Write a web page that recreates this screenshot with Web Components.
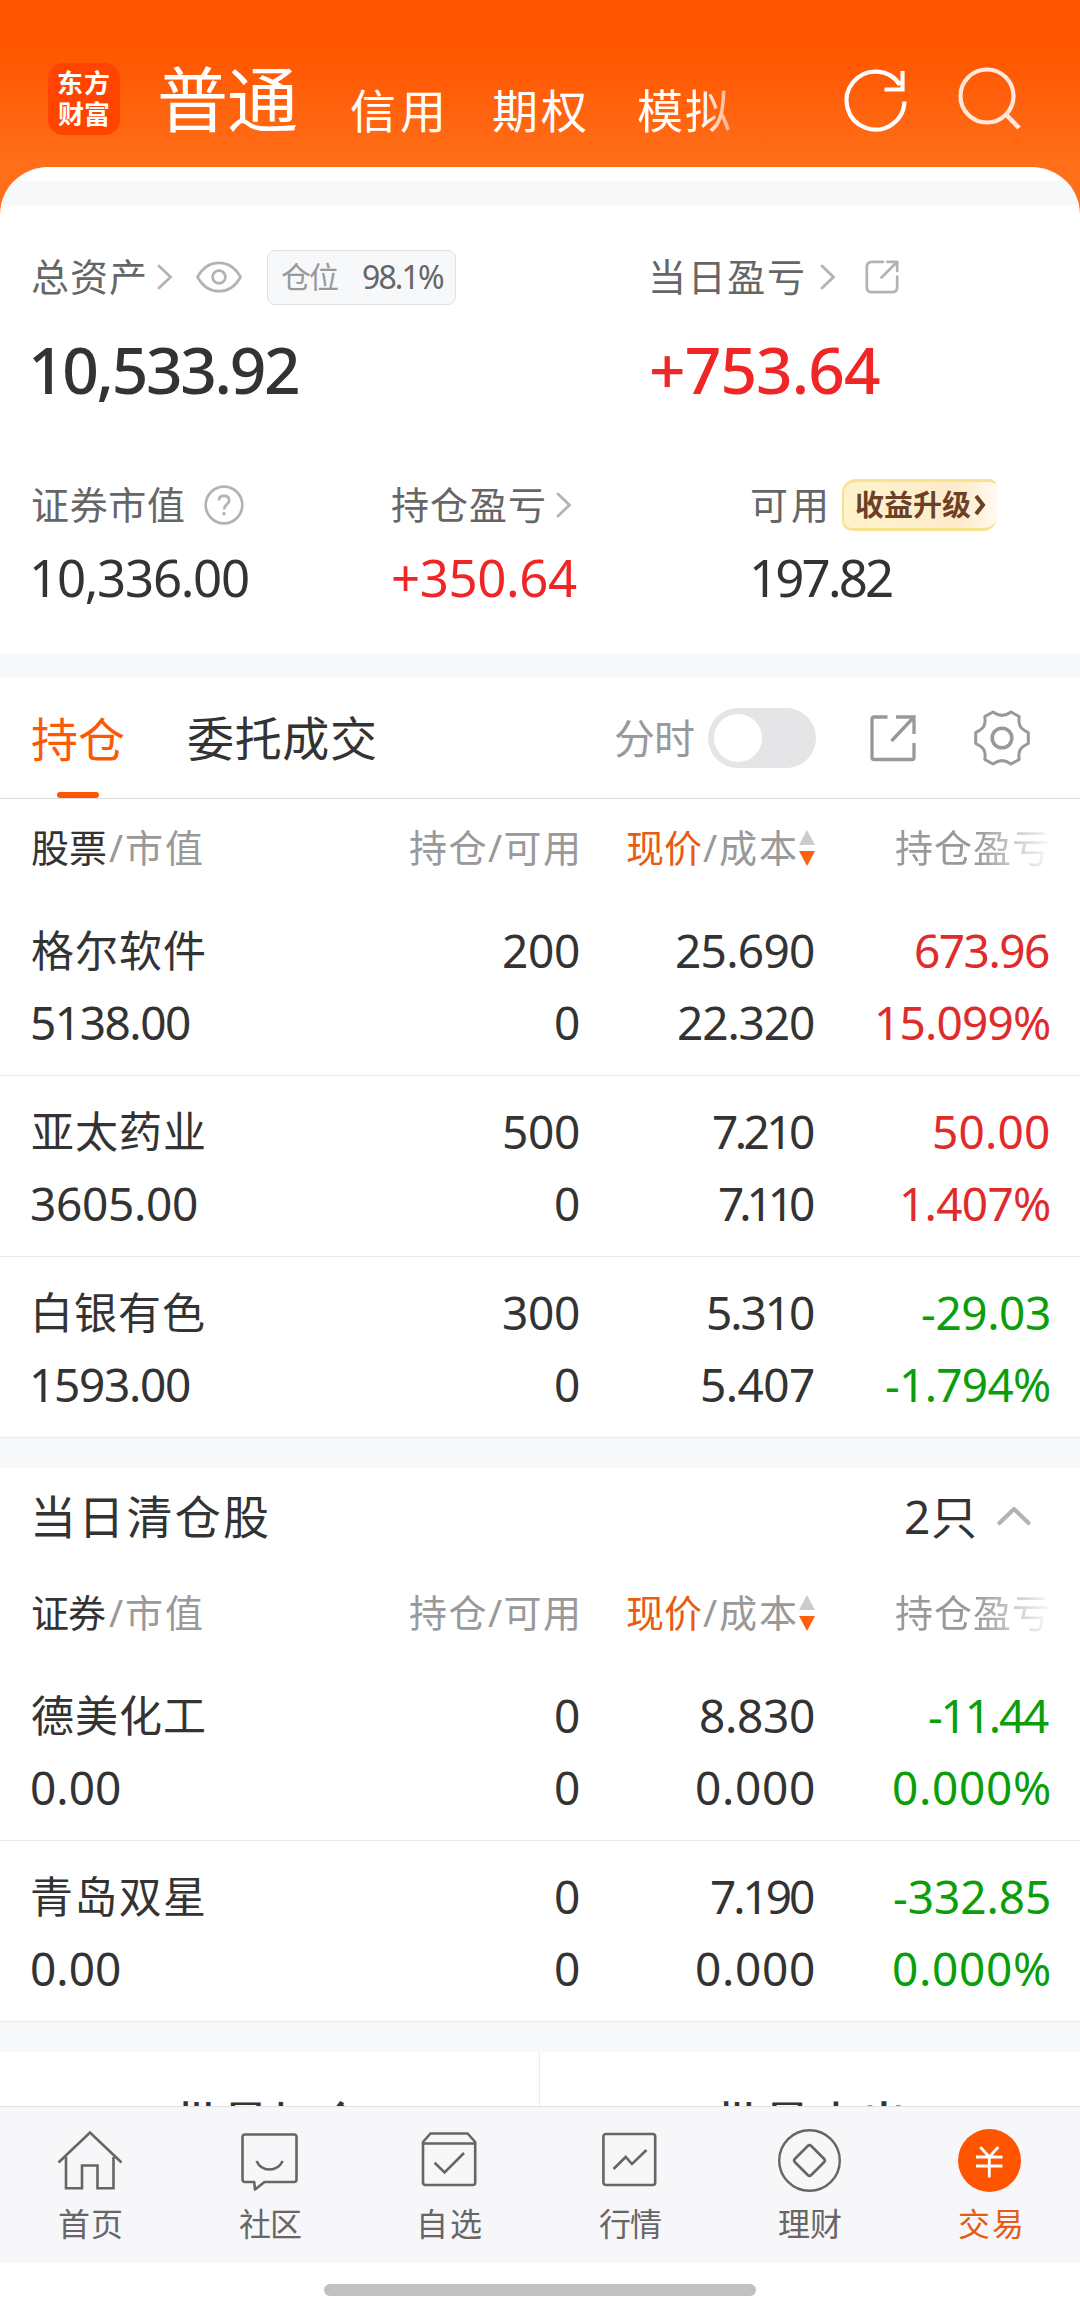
<!DOCTYPE html>
<html lang="zh-CN">
<head>
  <meta charset="utf-8">
  <title>交易</title>
  <style>
    html,
    body {
      margin: 0;
      padding: 0;
    }

    body {
      background-color: #FFFFFF;
      color: #333333;
      font-family: "Noto Sans", "Noto Sans CJK SC", sans-serif;
      height: 2318px;
      overflow: hidden;
      width: 1080px;
    }
  </style>
</head>
<body>
  <trade-page></trade-page>

  <script>
    class BaseElement extends HTMLElement {
      constructor() {
        super();

        const template = document.createElement('template');

        template.innerHTML = this.markup();
        this._shadow = this.attachShadow({ mode: 'open' });
        this._shadow.appendChild(template.content.cloneNode(true));
      }

      attr(name) {
        return this.getAttribute(name) || '';
      }
    }

    // A run of text whose box is its ink; "w" spreads the letters over that width,
    // "dx" keeps a small bearing before it.
    class TextRun extends BaseElement {
      markup() {
        return `
          <style>
            :host { display: block; flex: none; white-space: nowrap; }
            span { display: block; width: max-content; }
          </style>
          <span><slot></slot></span>
        `;
      }

      connectedCallback() {
        const text = this.textContent;
        const context = document.createElement('canvas').getContext('2d');

        context.font = getComputedStyle(this).font;

        const box = context.measureText(text);
        const ink = box.actualBoundingBoxLeft + box.actualBoundingBoxRight;
        const width = Number(this.attr('w')) || ink;
        const $span = this._shadow.querySelector('span');

        this.style.width = `${width}px`;
        this.style.paddingLeft = `${Number(this.attr('dx'))}px`;
        $span.style.marginLeft = `${box.actualBoundingBoxLeft}px`;

        if (text.length > 1) $span.style.letterSpacing = `${(width - ink) / (text.length - 1)}px`;
      }
    }

    const ICONS = {
      refresh: [64, 64, `<path d="M60.5 33.5A29 29 0 1 1 56 17M58.500 3V21.500H40.500" stroke-width="4.2"/>`],
      search: [64, 64, `<circle cx="31" cy="29" r="26.500" stroke-width="4.2"/><path d="M50 47.500L63 61" stroke-width="4.6"/>`],
      right: [16, 26, `<path d="M2 2L13.500 13L2 24" stroke-width="2.8" stroke-linecap="round"/>`],
      up: [34, 20, `<path d="M2.500 17L17 3L31.500 17" stroke-width="4.2" stroke-linecap="round" stroke-linejoin="round"/>`],
      eye: [46, 32, `<path d="M1.500 16C7 6 14 1.800 23 1.800S39 6 44.500 16C39 26 32 30.200 23 30.200S7 26 1.500 16Z" stroke-width="2.7" stroke-linejoin="round"/><circle cx="23" cy="16" r="6.400" stroke-width="2.7"/>`],
      shareRound: [34, 34, `<path d="M18 1.800H7Q1.800 1.800 1.800 7V27Q1.800 32.200 7 32.200H27Q32.200 32.200 32.200 27V16.500M22.500 1.800H32.200V11M32 2L16.500 17.500" stroke-width="2.7" stroke-linejoin="round" stroke-linecap="round"/>`],
      share: [48, 48, `<path d="M18.500 3H5Q3 3 3 5V43.500Q3 45.500 5 45.500H43Q45 45.500 45 43.500V29M27 3H45V20M44.500 3.500L22.500 27" stroke-width="3.3"/>`],
      help: [40, 40, `<circle cx="20" cy="20" r="18.300" stroke-width="2.7"/><path d="M14.800 15.500Q15 10.800 20 10.800T25.200 15.500C25.200 19.200 20 19.500 20 24.500" stroke-width="2.7"/><circle cx="20" cy="28.800" r="1.800" fill="currentColor" stroke="none"/>`],
      gear: [56, 56, `<path d="M19 2L10.800 6.500C12 15 10 18.500 1.700 22.500V33.500C10 37.500 12 41 10.800 49.500L19 54C25 49.500 31 49.500 37 54L45.200 49.500C44 41 46 37.500 54.300 33.500V22.500C46 18.500 44 15 45.200 6.500L37 2C31 6.500 25 6.500 19 2Z" stroke-width="3" stroke-linejoin="round"/><circle cx="28" cy="28" r="9.800" stroke-width="3.6"/>`],
      sort: [16, 36, `<path d="M8 0L16 15H0Z" fill="#CCCCCC" stroke="none"/><path d="M8 36L0 21H16Z" fill="#FF600F" stroke="none"/>`],
      home: [64, 68, `<path d="M.5 33.500L32 3.500L63.500 33.500M8 28V59.200H24V36.500H39.500V59.200H55.500V28" stroke-width="2.6"/>`],
      chat: [64, 68, `<path d="M7 5.500H56Q58.500 5.500 58.500 8V50.500Q58.500 53 56 53H26.500L17 60.500L16.200 53H7Q4.500 53 4.500 50.500V8Q4.500 5.500 7 5.500Z" stroke-width="2.6" stroke-linejoin="round"/><path d="M18.500 32Q22.500 40.500 31.500 40.500T44.700 32" stroke-width="2.6"/>`],
      box: [64, 68, `<path d="M12.500 4.500H49.600L57.200 13V53.500Q57.200 56 54.700 56H7.500Q5 56 5 53.500V13ZM5 14.500H57.200" stroke-width="2.6" stroke-linejoin="round"/><path d="M16.600 33.700L26.600 43.500L46 24" stroke-width="2.6"/>`],
      chart: [64, 68, `<rect x="5.400" y="5" width="51.800" height="51" rx="2.500" stroke-width="2.6"/><path d="M15.500 40L27.700 28L34 35L48.500 21" stroke-width="2.6"/>`],
      coin: [64, 68, `<circle cx="31.500" cy="31.500" r="30.300" stroke-width="2.4"/><rect x="20" y="20" width="23" height="23" rx="2.500" transform="rotate(45 31.500 31.500)" stroke-width="2.6"/>`],
      yuan: [64, 68, `<circle cx="31.500" cy="31.500" r="31.500" fill="#FF5500" stroke="none"/><path d="M22.300 18L31.300 28L40.300 18M18 28H44.500M18 37H44.500M31.300 28V48.500" stroke="#FFFFFF" stroke-width="2.8"/>`]
    };

    class UiIcon extends BaseElement {
      markup() {
        const [width, height, shape] = ICONS[this.attr('name')];

        return `
          <style>
            :host { display: block; flex: none; }
            svg { display: block; overflow: visible; }
          </style>
          <svg width="${width}" height="${height}" viewBox="0 0 ${width} ${height}" fill="none" stroke="currentColor">${shape}</svg>
        `;
      }
    }

    class AppHeader extends BaseElement {
      markup() {
        return `
          <style>
            :host {
              background: linear-gradient(#FF5500 0, #FF5500 46px, #FF6F1A 167px);
              box-sizing: border-box;
              color: #FFFFFF;
              display: flex;
              height: 215px;
              padding: 63px 0 0 48px;
            }

            .Logo {
              background-color: #FF4400;
              border-radius: 15px;
              box-sizing: border-box;
              font-size: 26px;
              font-weight: 700;
              height: 72px;
              line-height: 31px;
              margin-right: 40px;
              padding: 5px 0 0 10px;
              width: 72px;
            }

            .Tab {
              font-size: 46px;
              line-height: 72px;
              margin: 11px 52px 0 0;
            }

            .Tab--active {
              font-size: 71px;
              margin: 0 54px 0 0;
            }

            .Tab--faded {
              margin-right: 114px;
              -webkit-mask-image: linear-gradient(90deg, #000 62px, rgba(0, 0, 0, .5) 92px);
              mask-image: linear-gradient(90deg, #000 62px, rgba(0, 0, 0, .5) 92px);
            }

            .Refresh { margin: 5px 48px 0 0; }

            .Search {
              color: #FFE8DC;
              margin-top: 4px;
            }
          </style>
          <div class="Logo">
            <text-run w="51">东方</text-run>
            <text-run w="51">财富</text-run>
          </div>
          <text-run class="Tab Tab--active" w="136">普通</text-run>
          <text-run class="Tab" w="90" dx="1">信用</text-run>
          <text-run class="Tab" w="93">期权</text-run>
          <text-run class="Tab Tab--faded" w="92">模拟</text-run>
          <ui-icon class="Refresh" name="refresh"></ui-icon>
          <ui-icon class="Search" name="search"></ui-icon>
        `;
      }
    }

    class AssetSummary extends BaseElement {
      markup() {
        return `
          <style>
            :host {
              box-sizing: border-box;
              display: block;
              height: 449px;
              padding: 45px 0 0 32px;
            }

            .Row { display: grid; }
            .Row--top { grid-template-columns: 619px 1fr; margin-bottom: 73px; }
            .Row--bottom { grid-template-columns: 360px 360px 1fr; }

            .Label {
              align-items: center;
              color: #666666;
              display: flex;
              font-size: 38px;
              height: 54px;
              line-height: 52px;
            }

            .Label > text-run { margin-top: -2px; }
            .Row--bottom .Label { height: 52px; line-height: 50px; }

            ui-icon { color: #B3B3B3; }

            .Value {
              font-size: 64px;
              font-weight: 500;
              line-height: 72px;
              margin-top: 30px;
            }

            .Row--bottom .Value {
              font-size: 51px;
              font-weight: 400;
              line-height: 60px;
              margin-top: 16px;
            }

            .Value--up { color: #F02525; }

            .Pill {
              align-items: center;
              background-color: #F7F8FA;
              border: 1px solid #E0E0E0;
              border-radius: 8px;
              box-sizing: border-box;
              display: flex;
              font-size: 30px;
              gap: 25px;
              height: 55px;
              line-height: 51px;
              margin-left: 25px;
              padding: 0 0 2px 13px;
              width: 189px;
            }

            .Pill__Name { color: #999999; }
            .Pill__Rate { font-size: 32px; }

            .Badge {
              align-items: center;
              background: linear-gradient(90deg, #FEF3CB, #FDEBCB 75%, #FFFAF0);
              border: solid #F9E28F;
              border-right-color: #FFF6DC;
              border-width: 3px 0 3px 2px;
              border-radius: 14px 8px 14px 10px;
              box-sizing: border-box;
              color: #6B4026;
              display: flex;
              font-size: 29px;
              font-weight: 700;
              gap: 3px;
              height: 52px;
              line-height: 46px;
              margin-left: 17px;
              padding-left: 12px;
              width: 155px;
            }
          </style>
          <div class="Row Row--top">
            <div>
              <div class="Label">
                <text-run w="113">总资产</text-run>
                <ui-icon name="right" style="margin-left: 12px"></ui-icon>
                <ui-icon name="eye" style="margin-left: 23px"></ui-icon>
                <div class="Pill">
                  <text-run class="Pill__Name" w="57">仓位</text-run>
                  <text-run class="Pill__Rate" w="81">98.1%</text-run>
                </div>
              </div>
              <text-run class="Value" w="265" dx="1">10,533.92</text-run>
            </div>
            <div>
              <div class="Label">
                <text-run w="151" dx="1">当日盈亏</text-run>
                <ui-icon name="right" style="margin-left: 17px"></ui-icon>
                <ui-icon name="shareRound" style="margin-left: 29px"></ui-icon>
              </div>
              <text-run class="Value Value--up" w="228" dx="1">+753.64</text-run>
            </div>
          </div>
          <div class="Row Row--bottom">
            <div>
              <div class="Label">
                <text-run w="152">证券市值</text-run>
                <ui-icon name="help" style="margin-left: 20px"></ui-icon>
              </div>
              <text-run class="Value" w="215" dx="1">10,336.00</text-run>
            </div>
            <div>
              <div class="Label">
                <text-run w="152">持仓盈亏</text-run>
                <ui-icon name="right" style="margin-left: 12px"></ui-icon>
              </div>
              <text-run class="Value Value--up" w="184" dx="1">+350.64</text-run>
            </div>
            <div>
              <div class="Label">
                <text-run w="73">可用</text-run>
                <div class="Badge">
                  <text-run w="115">收益升级</text-run>
                  <svg width="12" height="22" fill="none" stroke="currentColor" stroke-width="4"><path d="M2 2L9 11L2 20"/></svg>
                </div>
              </div>
              <text-run class="Value" w="139" dx="1">197.82</text-run>
            </div>
          </div>
        `;
      }
    }

    class PositionTabs extends BaseElement {
      markup() {
        return `
          <style>
            :host {
              align-items: center;
              border-bottom: 1px solid #DDDDDD;
              color: #999999;
              display: flex;
              font-size: 47px;
              height: 120px;
              line-height: 122px;
              padding-left: 32px;
            }

            .Tab { color: #333333; }

            .Tab--active {
              color: #FA5A05;
              height: 120px;
              margin-right: 64px;
            }

            .Tab__Bar {
              background-color: #FF5500;
              border-radius: 3px;
              height: 6px;
              margin: -8px auto 0;
              width: 42px;
            }

            .Switch {
              background-color: #E5E5E7;
              border-radius: 30px;
              box-sizing: border-box;
              height: 60px;
              margin: 0 53px 0 14px;
              padding: 6px;
              width: 108px;
            }

            .Switch__Knob {
              background-color: #FFFFFF;
              border-radius: 50%;
              height: 48px;
              width: 48px;
            }
          </style>
          <div class="Tab--active">
            <text-run w="92">持仓</text-run>
            <div class="Tab__Bar"></div>
          </div>
          <text-run class="Tab" w="188">委托成交</text-run>
          <text-run w="79" style="font-size: 41px; margin-left: 239px">分时</text-run>
          <div class="Switch"><div class="Switch__Knob"></div></div>
          <ui-icon name="share"></ui-icon>
          <ui-icon name="gear" style="margin-left: 57px"></ui-icon>
        `;
      }
    }

    const COLUMNS = `
      box-sizing: border-box;
      display: grid;
      grid-template-columns: 247px 300px 235px 235px;
      padding-left: 32px;
    `;

    class StockHeader extends BaseElement {
      markup() {
        return `
          <style>
            :host {
              ${COLUMNS}
              color: #999999;
              font-size: 38px;
              height: 96px;
              line-height: 96px;
            }

            div { align-items: center; display: flex; }
            .First { color: #333333; margin-right: 3px; }
            .Price { color: #E65C12; margin-right: 2px; }
            .Held { justify-content: flex-end; padding-right: 2px; }
            .Cost { justify-content: flex-end; margin-right: -1px; }
            ui-icon { margin: 2px 0 0 3px; }

            .Profit {
              margin-left: 82px;
              -webkit-mask-image: linear-gradient(90deg, #000 80px, rgba(0, 0, 0, .08) 152px);
              mask-image: linear-gradient(90deg, #000 80px, rgba(0, 0, 0, .08) 152px);
            }
          </style>
          <div><text-run class="First" w="74">${this.attr('label')}</text-run><text-run w="93">/市值</text-run></div>
          <div class="Held"><text-run w="167">持仓/可用</text-run></div>
          <div class="Cost">
            <text-run class="Price" w="74">现价</text-run><text-run w="93">/成本</text-run>
            <ui-icon name="sort"></ui-icon>
          </div>
          <text-run class="Profit" w="152">持仓盈亏</text-run>
        `;
      }
    }

    // Cells are "text:width:dx", two lines of four columns.
    class StockRow extends BaseElement {
      markup() {
        const cells = this.attr('cells').split(' ').map((cell, index) => {
          const [text, width, dx] = cell.split(':');

          return `<text-run class="${index % 4 === 3 ? 'Profit' : ''}" w="${width || ''}" dx="${dx || ''}">${text}</text-run>`;
        });

        return `
          <style>
            :host {
              ${COLUMNS}
              border-bottom: 1px solid #EBEBEB;
              font-size: 46px;
              grid-template-rows: 72px 72px;
              height: 181px;
              line-height: 70px;
              padding-top: 20px;
            }

            text-run { justify-self: end; }
            text-run:nth-of-type(4n + 1) { justify-self: start; }
            text-run:nth-of-type(1) { font-size: 43px; line-height: 72px; }
            .Profit { color: #E02B2B; }
            :host([down]) .Profit { color: #0A9E0A; }
          </style>
          ${cells.join('')}
        `;
      }
    }

    class ClearedTitle extends BaseElement {
      markup() {
        return `
          <style>
            :host {
              align-items: center;
              display: flex;
              font-size: 46px;
              height: 96px;
              line-height: 98px;
              padding: 0 49px 0 32px;
            }

            .Count { margin: 0 22px 0 auto; }
            ui-icon { color: #B3B3B3; }
          </style>
          <text-run w="233" dx="3">当日清仓股</text-run>
          <text-run class="Count" w="69">2只</text-run>
          <ui-icon name="up"></ui-icon>
        `;
      }
    }

    class BatchActions extends BaseElement {
      markup() {
        return `
          <style>
            :host {
              display: grid;
              font-size: 46px;
              font-weight: 500;
              grid-template-columns: 539px 1fr;
              height: 54px;
              line-height: 140px;
              overflow: hidden;
            }

            div { display: flex; justify-content: center; }
            div + div { border-left: 1px solid #EBEBEB; }
          </style>
          <div><text-run w="186">批量加仓</text-run></div>
          <div><text-run w="186">批量卖出</text-run></div>
        `;
      }
    }

    class TabBar extends BaseElement {
      markup() {
        const tabs = [
          ['home', '首页'], ['chat', '社区'], ['box', '自选', 60, 2],
          ['chart', '行情'], ['coin', '理财'], ['yuan', '交易']
        ];

        return `
          <style>
            :host {
              background-color: #F7F7FA;
              border-top: 1px solid #E2E2E2;
              color: #666666;
              display: grid;
              font-size: 32px;
              grid-template-columns: repeat(6, 180px);
              height: 156px;
              line-height: 40px;
            }

            div {
              align-items: center;
              display: flex;
              flex-direction: column;
              gap: 7px;
              padding-top: 22px;
            }

            div:last-of-type { color: #E65C12; }
          </style>
          ${tabs.map(([icon, label, width = 62, dx = 0]) => `<div><ui-icon name="${icon}"></ui-icon><text-run w="${width}" dx="${dx}">${label}</text-run></div>`).join('')}
        `;
      }
    }

    class TradePage extends BaseElement {
      markup() {
        return `
          <style>
            :host { display: block; }

            .Sheet {
              background-color: #FFFFFF;
              border-radius: 48px 48px 0 0;
              margin-top: -48px;
              overflow: hidden;
              padding-top: 14px;
            }

            .Gap { background-color: #F7F8FA; height: 24px; }
            .Gap--large { height: 30px; }

            .HomeBar {
              background-color: #C1C1C1;
              border-radius: 6px;
              height: 12px;
              margin: 21px auto 0;
              width: 432px;
            }
          </style>
          <app-header></app-header>
          <div class="Sheet">
            <div class="Gap"></div>
            <asset-summary></asset-summary>
            <div class="Gap"></div>
            <position-tabs></position-tabs>
            <stock-header label="股票"></stock-header>
            <stock-row cells="格尔软件:172 200:75 25.690:137 673.96:133 5138.00:158 0 22.320:135 15.099%:171"></stock-row>
            <stock-row cells="亚太药业:172 500:75 7.210:100 50.00:115 3605.00:165 0 7.110:94 1.407%:146"></stock-row>
            <stock-row down cells="白银有色:168:4 300:75 5.310:106 -29.03:127 1593.00:157:1 0 5.407:112 -1.794%:163"></stock-row>
            <div class="Gap Gap--large"></div>
            <cleared-title></cleared-title>
            <stock-header label="证券"></stock-header>
            <stock-row down cells="德美化工:172 0 8.830:113 -11.44:120 0.00:88 0 0.000:117 0.000%:155"></stock-row>
            <stock-row down cells="青岛双星:172 0 7.190:102 -332.85:155 0.00:88 0 0.000:117 0.000%:155"></stock-row>
            <div class="Gap Gap--large"></div>
            <batch-actions></batch-actions>
          </div>
          <tab-bar></tab-bar>
          <div class="HomeBar"></div>
        `;
      }
    }

    // The parser has already made <trade-page>, so it upgrades last, with its parts ready.
    customElements.define('text-run', TextRun);
    customElements.define('ui-icon', UiIcon);
    customElements.define('app-header', AppHeader);
    customElements.define('asset-summary', AssetSummary);
    customElements.define('position-tabs', PositionTabs);
    customElements.define('stock-header', StockHeader);
    customElements.define('stock-row', StockRow);
    customElements.define('cleared-title', ClearedTitle);
    customElements.define('batch-actions', BatchActions);
    customElements.define('tab-bar', TabBar);
    customElements.define('trade-page', TradePage);
  </script>
</body>
</html>
